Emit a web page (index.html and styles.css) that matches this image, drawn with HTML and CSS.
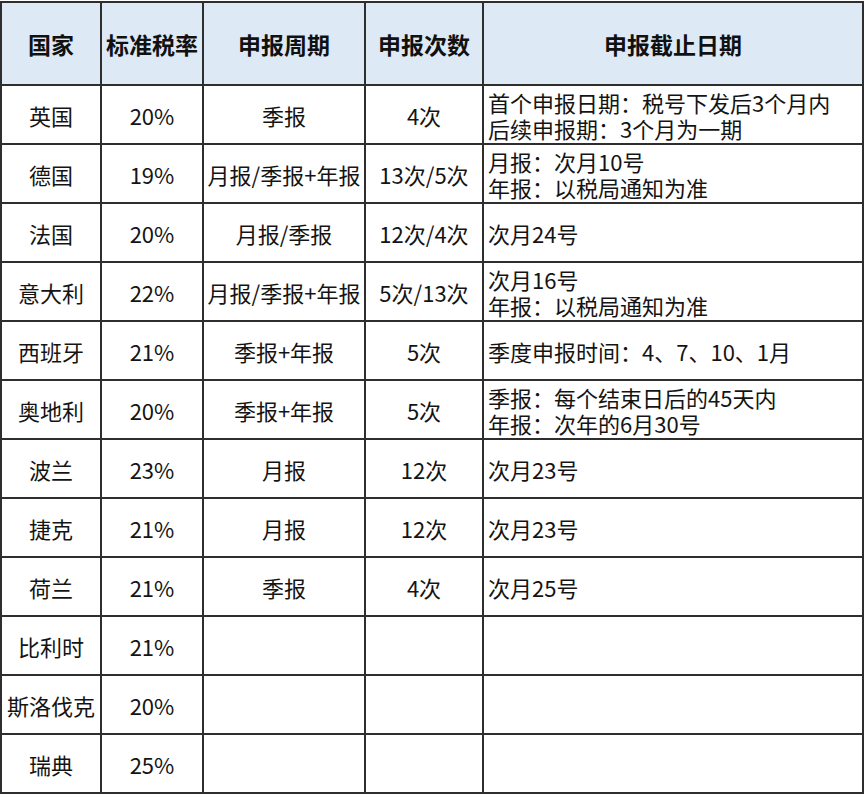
FILE: index.html
```html
<!DOCTYPE html>
<html lang="zh-CN">
<head>
<meta charset="utf-8">
<title>欧洲各国增值税申报</title>
<link rel="stylesheet" href="styles.css">
</head>
<body>
<table class="vat">
  <colgroup>
    <col class="c1"><col class="c2"><col class="c3"><col class="c4"><col class="c5">
  </colgroup>
  <thead>
    <tr>
      <th>国家</th>
      <th>标准税率</th>
      <th>申报周期</th>
      <th>申报次数</th>
      <th>申报截止日期</th>
    </tr>
  </thead>
  <tbody>
    <tr><td>英国</td><td>20%</td><td>季报</td><td>4次</td><td class="deadline">首个申报日期：税号下发后3个月内<br>后续申报期：3个月为一期</td></tr>
    <tr><td>德国</td><td>19%</td><td>月报/季报+年报</td><td>13次/5次</td><td class="deadline">月报：次月10号<br>年报：以税局通知为准</td></tr>
    <tr><td>法国</td><td>20%</td><td>月报/季报</td><td>12次/4次</td><td class="deadline">次月24号</td></tr>
    <tr><td>意大利</td><td>22%</td><td>月报/季报+年报</td><td>5次/13次</td><td class="deadline">次月16号<br>年报：以税局通知为准</td></tr>
    <tr><td>西班牙</td><td>21%</td><td>季报+年报</td><td>5次</td><td class="deadline">季度申报时间：4、7、10、1月</td></tr>
    <tr><td>奥地利</td><td>20%</td><td>季报+年报</td><td>5次</td><td class="deadline">季报：每个结束日后的45天内<br>年报：次年的6月30号</td></tr>
    <tr><td>波兰</td><td>23%</td><td>月报</td><td>12次</td><td class="deadline">次月23号</td></tr>
    <tr><td>捷克</td><td>21%</td><td>月报</td><td>12次</td><td class="deadline">次月23号</td></tr>
    <tr><td>荷兰</td><td>21%</td><td>季报</td><td>4次</td><td class="deadline">次月25号</td></tr>
    <tr><td>比利时</td><td>21%</td><td></td><td></td><td class="deadline"></td></tr>
    <tr><td>斯洛伐克</td><td>20%</td><td></td><td></td><td class="deadline"></td></tr>
    <tr><td>瑞典</td><td>25%</td><td></td><td></td><td class="deadline"></td></tr>
  </tbody>
</table>
</body>
</html>
```
FILE: styles.css
```css
html, body {
  margin: 0;
  padding: 0;
  background: #ffffff;
}

body {
  padding-top: 1px;
  font-family: "Noto Sans CJK SC", "Noto Sans", sans-serif;
  color: #141414;
}

.vat {
  border-collapse: separate;
  border-spacing: 0;
  table-layout: fixed;
  width: 864px;
}

.c1 { width: 102px; }
.c2 { width: 102px; }
.c3 { width: 162px; }
.c4 { width: 118px; }
.c5 { width: 380px; }

.vat th,
.vat td {
  box-sizing: border-box;
  border-right: 2px solid #2e2e2e;
  border-bottom: 2px solid #2e2e2e;
  padding: 0;
  text-align: center;
  vertical-align: middle;
}

.vat th:first-child,
.vat td:first-child {
  border-left: 2px solid #2e2e2e;
}

.vat th {
  height: 85px;
  border-top: 2px solid #2e2e2e;
  background: #ddeaf6;
  font-size: 23px;
  font-weight: 700;
  line-height: 30px;
  color: #111111;
}

.vat td {
  height: 59px;
  font-size: 22px;
  line-height: 26px;
  white-space: nowrap;
}

.vat td.deadline {
  text-align: left;
  padding-left: 4px;
}
```
